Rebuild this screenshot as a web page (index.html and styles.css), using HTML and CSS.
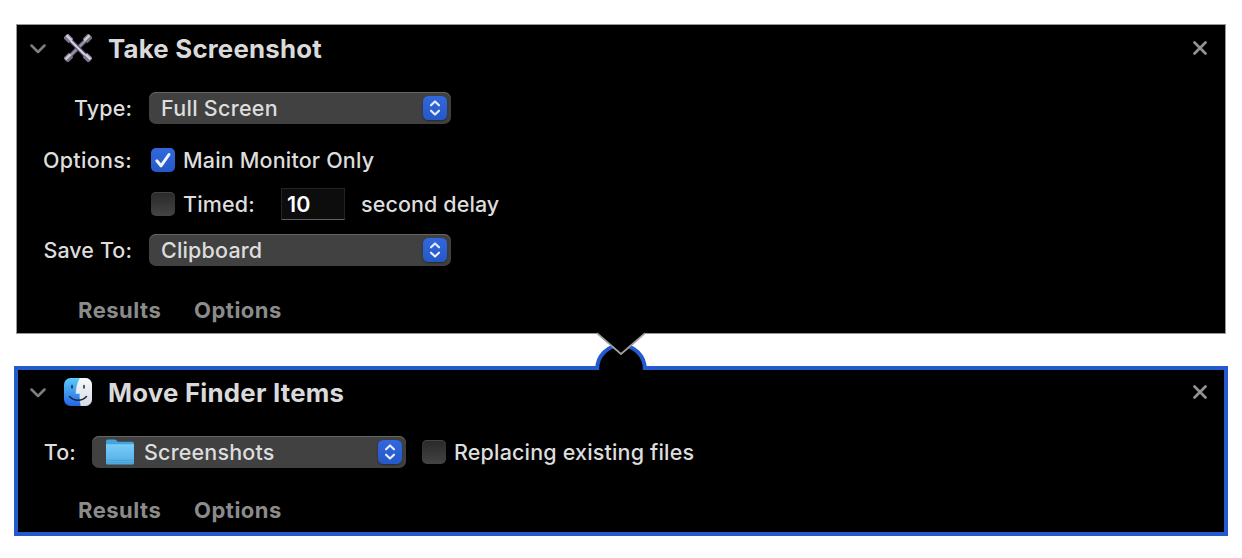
FILE: index.html
```html
<!DOCTYPE html>
<html lang="en">
<head>
<meta charset="utf-8">
<title>Workflow</title>
<link rel="stylesheet" href="styles.css">
</head>
<body>
<svg class="defs" width="0" height="0" aria-hidden="true">
  <defs>
    <linearGradient id="folderFill" x1="0" y1="0" x2="0" y2="1"><stop offset="0" stop-color="#78cbf8"/><stop offset="1" stop-color="#52ade2"/></linearGradient>
    <linearGradient id="faceLeft" x1="0" y1="0" x2="0" y2="1"><stop offset="0" stop-color="#5ccbfa"/><stop offset="1" stop-color="#2465e6"/></linearGradient>
    <linearGradient id="faceRight" x1="0" y1="0" x2="0" y2="1"><stop offset="0" stop-color="#f8f9fb"/><stop offset="1" stop-color="#d5dae4"/></linearGradient>
    <clipPath id="faceClip"><rect width="28" height="28" rx="6.5"/></clipPath>
    <symbol id="chevron" viewBox="0 0 16 10"><path d="M1.500 1.500 8 8l6.500-6.500" fill="none" stroke="#7f7f7f" stroke-width="2.500" stroke-linecap="round" stroke-linejoin="round"/></symbol>
    <symbol id="close" viewBox="0 0 14 14"><path d="M1.500 1.500l11 11M12.500 1.500l-11 11" fill="none" stroke="#929292" stroke-width="2.700" stroke-linecap="round"/></symbol>
    <symbol id="updown" viewBox="0 0 24 24"><path d="M8 9.300 12 5.400l4 3.900M8 14.700l4 3.900 4-3.900" fill="none" stroke="#e8eefb" stroke-width="2.100" stroke-linecap="round" stroke-linejoin="round"/></symbol>
  </defs>
</svg>
<main class="workflow">
  <section class="action">
    <header class="action-header">
      <svg class="chevron"><use href="#chevron"/></svg>
      <svg class="app-icon" viewBox="0 0 28 28">
        <g stroke-linecap="butt">
          <path d="M24.500 3.500l-21 21" stroke="#625b78" stroke-width="4"/>
          <path d="M24.500 3.500l-21 21" stroke="#a39daf" stroke-width="1.700"/>
          <path d="M26.500 1.500l-5.500 5.500M1.500 26.500l5.500-5.500" stroke="#77707f" stroke-width="6.600"/>
          <path d="M25.600 1.300l-5.300 5.300M1.500 25.300l5-5" stroke="#cfcbd6" stroke-width="2.500"/>
          <path d="M3.500 3.500l21 21" stroke="#5b5276" stroke-width="4.400"/>
          <path d="M3.500 3.500l21 21" stroke="#d8d4e2" stroke-width="2"/>
          <path d="M1.500 1.500l5.500 5.500M26.500 26.500l-5.500-5.500" stroke="#7d748d" stroke-width="6.600"/>
          <path d="M2.500 1.300l5.300 5.300M26.600 25.400l-5-5" stroke="#d2cdda" stroke-width="2.600"/>
        </g>
      </svg>
      <h2 class="title title-shot">Take Screenshot</h2>
      <svg class="close"><use href="#close"/></svg>
    </header>
    <div class="row row-select">
      <span class="label type">Type:</span>
      <div class="select"><span class="value full">Full Screen</span><svg class="stepper"><use href="#updown"/></svg></div>
    </div>
    <div class="row row-main">
      <span class="label options">Options:</span>
      <span class="check checked"><svg viewBox="0 0 24 24"><path d="M5.800 12.800l4.200 5L18 6.500" fill="none" stroke="#f0f4ff" stroke-width="3" stroke-linecap="round" stroke-linejoin="round"/></svg></span>
      <span class="text main-only">Main Monitor Only</span>
    </div>
    <div class="row row-timed">
      <span class="label"></span>
      <span class="check"></span>
      <span class="text timed">Timed:</span>
      <span class="field">10</span>
      <span class="text delay">second delay</span>
    </div>
    <div class="row row-save">
      <span class="label save">Save To:</span>
      <div class="select"><span class="value clip">Clipboard</span><svg class="stepper"><use href="#updown"/></svg></div>
    </div>
    <footer class="tabs"><span class="results">Results</span><span class="opts">Options</span></footer>
  </section>
  <section class="action selected">
    <header class="action-header">
      <svg class="chevron"><use href="#chevron"/></svg>
      <svg class="app-icon" viewBox="0 0 28 28">
        <g clip-path="url(#faceClip)">
          <rect width="28" height="28" fill="url(#faceLeft)"/>
          <path d="M16 0C13.300 5 12.200 9.500 11.900 15.500h4c-.2 4.500.1 8.500 1.100 12.500h11V0z" fill="url(#faceRight)"/>
          <path d="M16 0C13.300 5 12.200 9.500 11.900 15.500h4c-.2 4.500.1 8.500 1.100 12.500" fill="none" stroke="#fff" stroke-opacity=".5" stroke-width=".7"/>
          <path d="M8 7.500v2.400M20 7.500v2.400M5.500 18.500c4.600 5.100 12.400 5.100 17 0" fill="none" stroke="#1d2637" stroke-width="1.500" stroke-linecap="round"/>
        </g>
      </svg>
      <h2 class="title title-move">Move Finder Items</h2>
      <svg class="close"><use href="#close"/></svg>
    </header>
    <div class="row row-to">
      <span class="label to">To:</span>
      <div class="select select-folder">
        <svg class="folder" viewBox="0 0 28 26"><path d="M0 2.500Q0 .5 2 .5h6.500q1 0 2 1l1.500 1.300h14q2 0 2 2V10H0z" fill="#42a3df"/><path d="M0 6h28v18q0 1.500-1.500 1.500h-25Q0 25.500 0 24z" fill="url(#folderFill)"/><path d="M0 5.800h28" stroke="#93d8fb" stroke-width=".8"/><path d="M0 21.300h28M0 23.700h28" stroke="#3f98cf" stroke-width=".7"/></svg>
        <span class="value shots">Screenshots</span><svg class="stepper"><use href="#updown"/></svg>
      </div>
      <span class="check"></span>
      <span class="text replacing">Replacing existing files</span>
    </div>
    <footer class="tabs"><span class="results">Results</span><span class="opts">Options</span></footer>
  </section>
  <svg class="connector" viewBox="0 0 60 42">
    <path d="M6.500 42V37.500a23.500 23.500 0 0 1 47 0V42z" fill="#000"/>
    <path d="M6.200 38V37a23.800 23.800 0 0 1 47.600 0v1" fill="none" stroke="#2459d0" stroke-width="4"/>
    <path d="M6 0v1.500L30 22 54 1.500V0z" fill="#000"/>
    <path d="M6 1.500h.5L30 22 53.500 1.500h.5" fill="none" stroke="#a0a0a0" stroke-width="1.700"/>
  </svg>
</main>
</body>
</html>
```
FILE: styles.css
```css
* { box-sizing: border-box; }
body { margin: 0; background: #fff; color: #dddddd; font: 450 21.5px/32px Inter, "Liberation Sans", sans-serif; letter-spacing: .17px; }
svg { display: block; flex: none; }
.defs { position: absolute; }
.workflow { position: relative; height: 558px; padding: 24px 14px 0; overflow: hidden; }
.action { height: 310px; margin: 0 2px; background: #000; border: 1px solid #989898; white-space: nowrap; }
.selected { height: 170px; margin: 32px 0 0; border: 4px solid #2459d0; }
.action-header { display: flex; align-items: center; height: 46px; padding: 0 18px 0 13px; }
.selected .action-header { height: 44px; padding: 0 17px 0 12px; }
.chevron { width: 16px; height: 10px; margin-top: 2px; }
.app-icon { width: 28px; height: 28px; margin: 0 16px 0 18px; }
.title { flex: 1; margin: 0; padding-top: 1px; color: #dadada; font-size: 25.800px; font-weight: 700; letter-spacing: .22px; }
.close { width: 14px; height: 14px; }
.row { display: flex; align-items: center; height: 32px; }
.row-select { margin-top: 21px; }
.row-main { margin-top: 20px; }
.row-timed { margin-top: 12px; }
.row-save { margin-top: 14px; }
.label { width: 132px; padding-right: 17px; text-align: right; flex: none; }
.type { letter-spacing: .1px; }
.options { letter-spacing: .32px; }
.save { letter-spacing: .08px; }
.full { letter-spacing: .28px; }
.select { display: flex; align-items: center; justify-content: space-between; width: 302px; height: 32px; padding: 0 4px 0 12px; border-radius: 7px; background: #414141; box-shadow: inset 0 1px #646464; }
.stepper { width: 24px; height: 24px; border-radius: 5.500px; background: linear-gradient(#3268dd, #2558c8); box-shadow: 0 1px 2px #0006; }
.check { flex: none; width: 24px; height: 24px; margin-left: 2px; border-radius: 5px; background: linear-gradient(#292929, #444); box-shadow: inset 0 1px #444; }
.checked { background: linear-gradient(#3268dd, #2558c8); box-shadow: none; }
.text { margin-left: 8px; }
.timed { width: 98px; }
.field { width: 64px; height: 32px; padding-left: 5px; border: 1px solid #242424; border-bottom-color: #606060; background: #0d0d0d; color: #fff; font-weight: 600; line-height: 31px; }
.delay { margin-left: 16px; letter-spacing: .1px; }
.tabs { display: flex; height: 32px; margin-top: 28px; padding-left: 61px; color: #8b8b8b; font-size: 22px; font-weight: 700; letter-spacing: .5px; }
.results { width: 116px; }
.row-to { margin-top: 22px; }
.to { width: 74px; padding-right: 16px; }
.select-folder { width: 314px; padding-left: 14px; }
.folder { width: 28px; height: 26px; margin-right: 10px; }
.shots { flex: 1; }
.row-to .check { margin-left: 16px; }
.selected .tabs { margin-top: 26px; padding-left: 60px; }
.connector { position: absolute; left: 591px; top: 332px; width: 60px; height: 42px; }
```
